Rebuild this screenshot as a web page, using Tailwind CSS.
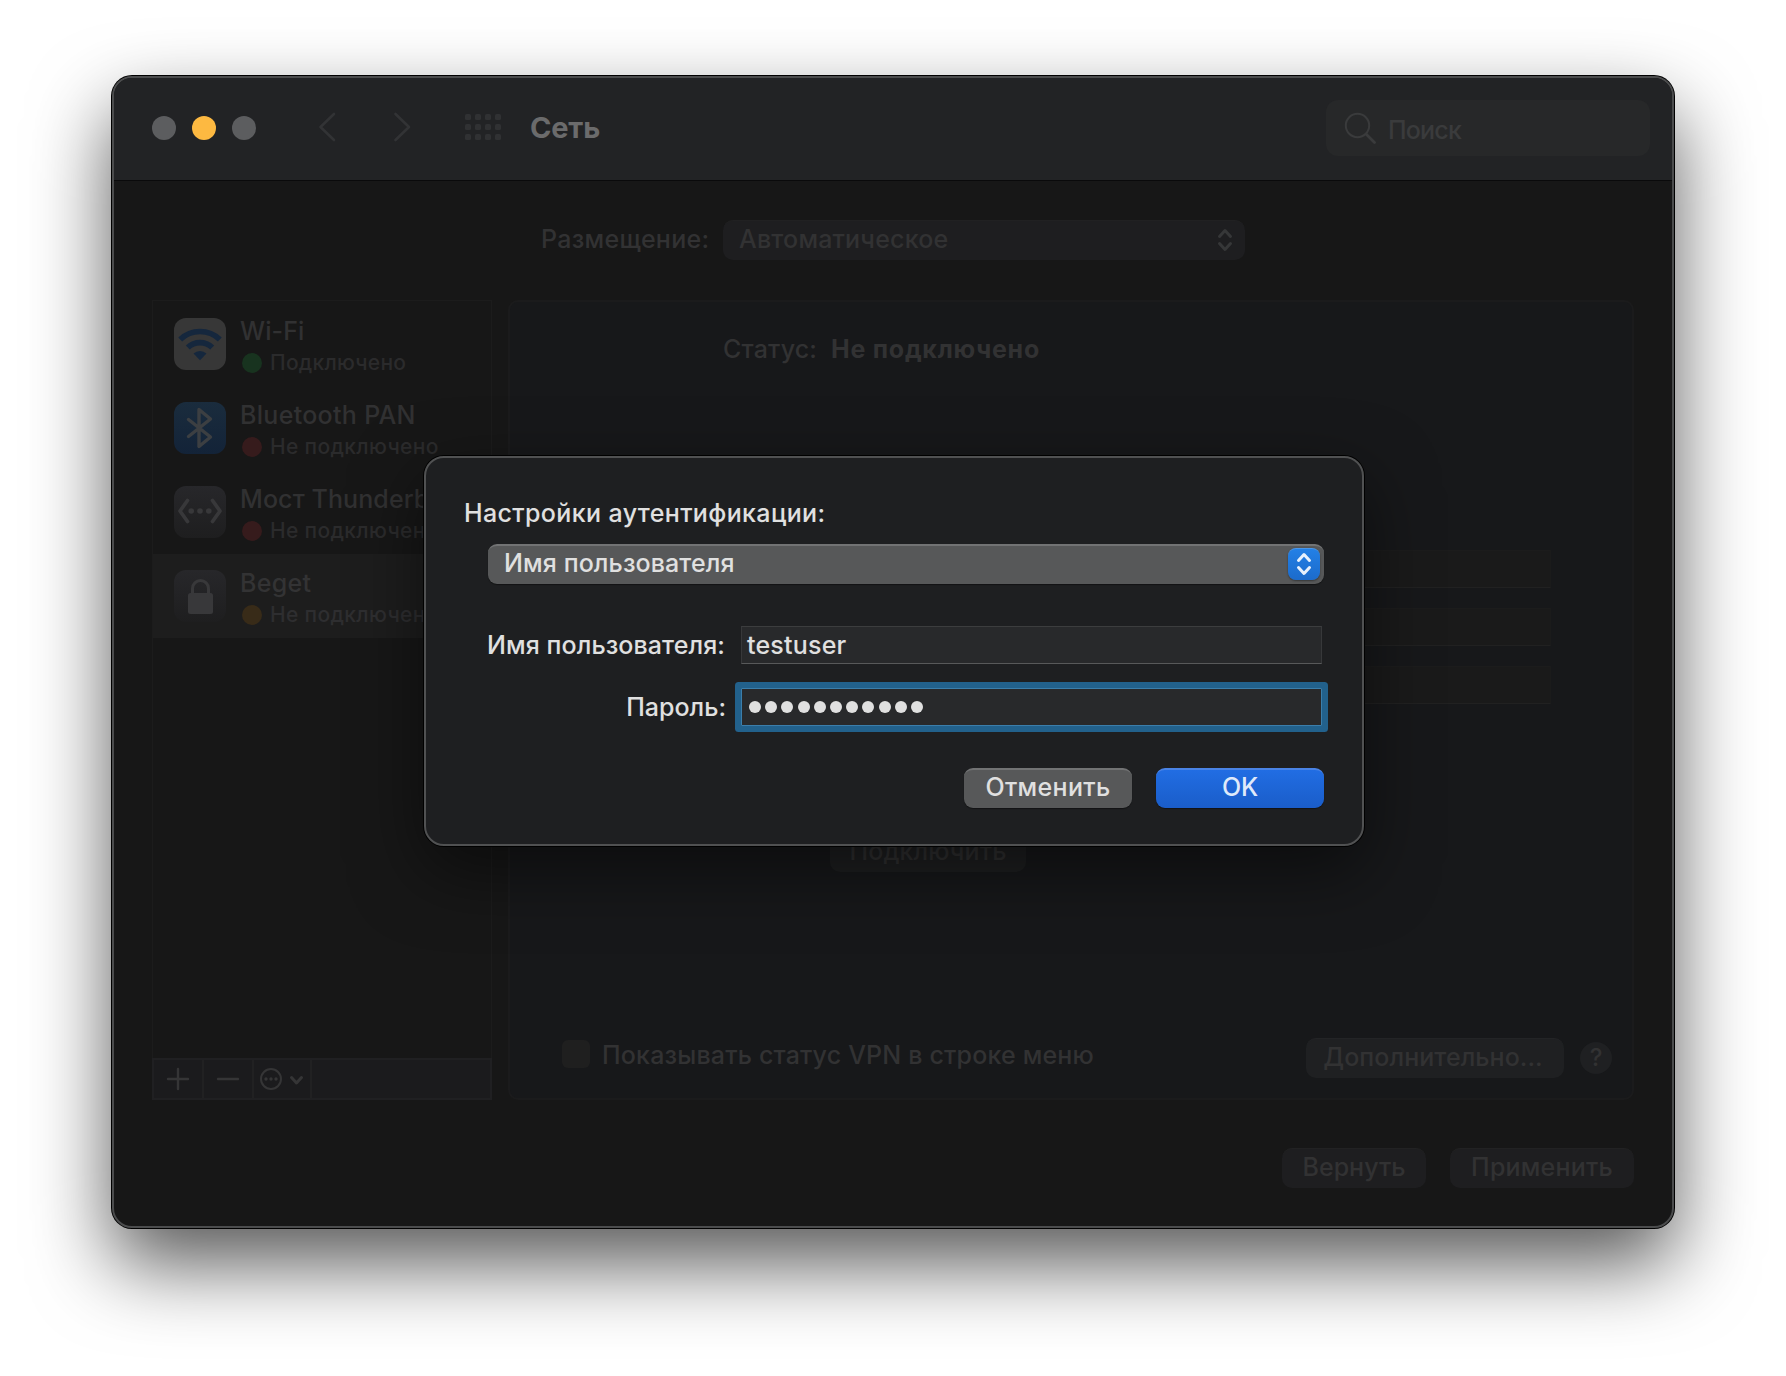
<!DOCTYPE html>
<html lang="ru">
	<head>
		<meta charset="UTF-8" />
		<meta name="viewport" content="width=device-width, initial-scale=1.0" />
		<title>Сеть</title>
		<script src="https://cdn.jsdelivr.net/npm/@tailwindcss/browser@4"></script>
	</head>
	<body
		class="h-[1376px] overflow-hidden bg-white pt-[76px] pl-[112px] font-['Inter','Liberation_Sans',sans-serif] text-[25px] leading-[30px] font-medium text-[#323233]"
	>
		<!-- Window -->
		<div
			class="relative h-[1152px] w-[1562px] rounded-[20px] border-2 border-[#4b4c4d] bg-[#171717] shadow-[0_0_0_1px_#000,0_36px_80px_rgba(0,0,0,0.66)]"
		>
			<!-- Title bar -->
			<header
				class="flex h-[103px] items-center rounded-t-[18px] border-b border-black/70 bg-[#222325] pr-[22px] pb-[2px] pl-[38px]"
			>
				<div class="flex gap-4">
					<span class="size-6 rounded-full bg-[#5c5d5f]"></span>
					<span class="size-6 rounded-full bg-[#fdb941]"></span>
					<span class="size-6 rounded-full bg-[#5c5d5f]"></span>
				</div>
				<svg class="mb-[2px] ml-[61px] h-[30px] w-[20px]" viewBox="0 0 20 30" fill="none" stroke="#323335" stroke-width="2.6" stroke-linecap="round" stroke-linejoin="round">
					<path d="M17 2 3.500 15 17 28" />
				</svg>
				<svg class="mb-[2px] ml-[55px] h-[30px] w-[20px]" viewBox="0 0 20 30" fill="none" stroke="#323335" stroke-width="2.6" stroke-linecap="round" stroke-linejoin="round">
					<path d="M3.500 2 17 15 3.500 28" />
				</svg>
				<div class="mb-[2px] ml-[53px] grid grid-cols-4 gap-[4px]">
					<span class="size-[6px] rounded-[1.5px] bg-[#303133]"></span>
					<span class="size-[6px] rounded-[1.5px] bg-[#303133]"></span>
					<span class="size-[6px] rounded-[1.5px] bg-[#303133]"></span>
					<span class="size-[6px] rounded-[1.5px] bg-[#303133]"></span>
					<span class="size-[6px] rounded-[1.5px] bg-[#303133]"></span>
					<span class="size-[6px] rounded-[1.5px] bg-[#303133]"></span>
					<span class="size-[6px] rounded-[1.5px] bg-[#303133]"></span>
					<span class="size-[6px] rounded-[1.5px] bg-[#303133]"></span>
					<span class="size-[6px] rounded-[1.5px] bg-[#303133]"></span>
					<span class="size-[6px] rounded-[1.5px] bg-[#303133]"></span>
					<span class="size-[6px] rounded-[1.5px] bg-[#303133]"></span>
					<span class="size-[6px] rounded-[1.5px] bg-[#303133]"></span>
				</div>
				<h1 class="mb-px ml-[29px] text-[29px] font-bold tracking-[-0.2px] text-[#6b6b6c]">Сеть</h1>
				<div class="ml-auto flex h-14 w-[324px] items-center rounded-[12px] bg-[#272829] pl-[18px] text-[#3a3b3c]">
					<svg class="size-8" viewBox="0 0 32 32" fill="none" stroke="currentColor" stroke-linecap="round">
						<circle cx="13.500" cy="13.500" r="11.700" stroke-width="2" />
						<path d="m22.500 22.500 8 8" stroke-width="2.800" />
					</svg>
					<span class="mt-[3px] ml-[12px] tracking-[-0.8px]">Поиск</span>
				</div>
			</header>

			<!-- Location -->
			<div class="mt-[39px] flex h-10 items-center pl-[426px]">
				<span class="w-[183px] pb-[2px] pl-px tracking-[0.3px]">Размещение:</span>
				<div class="flex h-10 w-[522px] items-center rounded-[10px] border-t border-[#212122] bg-[#1e1e20] pr-[12px] pb-[3px] pl-[16px]">
					<span class="tracking-[0.2px]">Автоматическое</span>
					<svg class="mt-[2px] ml-auto h-6 w-4" viewBox="0 0 16 24" fill="none" stroke="#363738" stroke-width="3" stroke-linecap="round" stroke-linejoin="round">
						<path d="M2.500 8.500 8 2.500l5.500 6M2.500 15.500l5.500 6 5.500-6" />
					</svg>
				</div>
			</div>

			<main class="mt-10 flex gap-4 pl-[38px]">
				<!-- Services -->
				<aside class="flex h-[800px] w-[340px] flex-col border border-[#1c1c1c]">
					<ul class="mt-px flex-1">
						<li class="flex h-[84px] pt-4 pl-[21px]">
							<svg class="size-[52px]" viewBox="0 0 52 52">
								<rect width="52" height="52" rx="12" fill="#373737" />
								<g fill="none" stroke="#15273d" stroke-width="5.600">
									<path d="M6.200 21.500a28.500 28.500 0 0 1 39.600 0" />
									<path d="M13.800 29.600a17.500 17.500 0 0 1 24.400 0" />
								</g>
								<path d="m26 42.200-6.500-6.600a9.500 9.500 0 0 1 13 0z" fill="#15273d" />
							</svg>
							<div class="ml-[14px]">
								<div class="-mt-[2px] tracking-[0.1px] text-[#313132]">Wi-Fi</div>
								<div class="mt-[1px] flex items-center text-[21px] tracking-[0.25px] text-[#2b2b2c]">
									<span class="mr-[8px] ml-[2px] size-5 rounded-full bg-[#18331f]"></span><span class="mt-px">Подключено</span>
								</div>
							</div>
						</li>
						<li class="flex h-[84px] pt-4 pl-[21px]">
							<svg class="size-[52px]" viewBox="0 0 52 52">
								<defs>
									<linearGradient id="bt" x2="0" y2="1">
										<stop stop-color="#1a2c3d" />
										<stop offset="1" stop-color="#132338" />
									</linearGradient>
								</defs>
								<rect width="52" height="52" rx="12" fill="url(#bt)" />
								<path d="m14.500 17.500 22 17.500-11.500 9.500v-37l11.500 9.500-22 17.500" fill="none" stroke="#3c3f42" stroke-width="3.400" stroke-linecap="round" stroke-linejoin="round" />
							</svg>
							<div class="ml-[14px]">
								<div class="-mt-[2px] tracking-[0.3px] text-[#313132]">Bluetooth PAN</div>
								<div class="mt-[1px] flex items-center text-[21px] tracking-[0.35px] text-[#2b2b2c]">
									<span class="mr-[8px] ml-[2px] size-5 rounded-full bg-[#361b1c]"></span><span class="mt-px">Не подключено</span>
								</div>
							</div>
						</li>
						<li class="flex h-[84px] pt-4 pl-[21px]">
							<svg class="size-[52px]" viewBox="0 0 52 52">
								<defs>
									<linearGradient id="grey" x2="0" y2="1">
										<stop stop-color="#27272a" />
										<stop offset="1" stop-color="#1e1e1f" />
									</linearGradient>
								</defs>
								<rect width="52" height="52" rx="12" fill="url(#grey)" />
								<g fill="none" stroke="#38383a" stroke-width="3.700" stroke-linejoin="round" stroke-linecap="round">
									<path d="m13.500 14.500-7.500 10.500 7.500 10.500M38.500 14.500l7.500 10.500-7.500 10.500" />
								</g>
								<g fill="#38383a">
									<circle cx="17.200" cy="25" r="2.800" />
									<circle cx="26" cy="25" r="2.800" />
									<circle cx="34.800" cy="25" r="2.800" />
								</g>
							</svg>
							<div class="ml-[14px] whitespace-nowrap">
								<div class="-mt-[2px] tracking-[0.1px] text-[#313132]">Мост Thunderbolt</div>
								<div class="mt-[1px] flex items-center text-[21px] tracking-[0.35px] text-[#2b2b2c]">
									<span class="mr-[8px] ml-[2px] size-5 rounded-full bg-[#361b1c]"></span><span class="mt-px">Не подключено</span>
								</div>
							</div>
						</li>
						<li class="flex h-[84px] bg-[#1d1d1d] pt-4 pl-[21px]">
							<svg class="size-[52px]" viewBox="0 0 52 52">
								<rect width="52" height="52" rx="12" fill="url(#grey)" />
								<path d="M18.500 24v-5.500a8 8 0 0 1 16 0V24" fill="none" stroke="#38383a" stroke-width="3" />
								<rect x="14" y="23" width="25" height="21" rx="2.500" fill="#38383a" />
							</svg>
							<div class="ml-[14px]">
								<div class="-mt-[2px] tracking-[0.3px] text-[#333334]">Beget</div>
								<div class="mt-[1px] flex items-center text-[21px] tracking-[0.35px] text-[#2e2e30]">
									<span class="mr-[8px] ml-[2px] size-5 rounded-full bg-[#382b18]"></span><span class="mt-px">Не подключено</span>
								</div>
							</div>
						</li>
					</ul>
					<div class="-mx-px -mb-px flex h-[42px] border-2 border-[#202022] bg-[#1b1b1d] text-[#353536]">
						<svg class="h-full w-[50px] border-r-2 border-[#212122]" viewBox="0 0 48 38" fill="none" stroke="currentColor" stroke-width="2.400" stroke-linecap="round">
							<path d="M14 19h20M24 9v20" />
						</svg>
						<svg class="h-full w-[50px] border-r-2 border-[#212122]" viewBox="0 0 48 38" fill="none" stroke="currentColor" stroke-width="2.400" stroke-linecap="round">
							<path d="M14 19h20" />
						</svg>
						<svg class="h-full w-[58px] border-r-2 border-[#212122]" viewBox="0 0 56 38" fill="none" stroke="currentColor" stroke-width="2">
							<circle cx="17" cy="19" r="10" />
							<g fill="currentColor" stroke="none">
								<circle cx="12" cy="19" r="1.700" />
								<circle cx="17" cy="19" r="1.700" />
								<circle cx="22" cy="19" r="1.700" />
							</g>
							<path d="m37.500 17.500 5 5.500 5-5.500" stroke-width="3" stroke-linecap="round" stroke-linejoin="round" />
						</svg>
					</div>
				</aside>

				<!-- Details -->
				<section class="flex h-[800px] w-[1126px] flex-col rounded-[10px] border-2 border-[#1b1b1c] bg-[#17181a] pl-[213px]">
					<div class="mt-8 flex text-[#323233]">
						<span class="w-[108px] tracking-[0.2px]">Статус:</span>
						<span class="font-bold tracking-[0.75px]">Не подключено</span>
					</div>
					<div class="mt-[186px] ml-[108px] grid w-[720px] gap-5">
						<span class="h-[38px] border border-t-[#1c1c1c] border-r-[#1b1b1b] border-b-[#212121] border-l-[#1b1b1b] bg-[#1a1a1a]"></span>
						<span class="h-[38px] border border-t-[#1c1c1c] border-r-[#1b1b1b] border-b-[#212121] border-l-[#1b1b1b] bg-[#1a1a1a]"></span>
						<span class="h-[38px] border border-t-[#1c1c1c] border-r-[#1b1b1b] border-b-[#212121] border-l-[#1b1b1b] bg-[#1a1a1a]"></span>
					</div>
					<button class="mt-32 ml-[107px] h-10 w-[196px] rounded-[10px] bg-[#1e1f20] pb-[2px] tracking-[0.1px] text-[#303031]">Подключить</button>
					<div class="mt-[166px] -ml-[213px] flex h-10 items-center pl-[52px]">
						<span class="mb-[8px] h-7 w-7 rounded-[6px] bg-[#1f1f1f]"></span>
						<span class="mb-[7px] ml-[12px] tracking-[0.18px]">Показывать статус VPN в строке меню</span>
						<button class="ml-auto h-10 w-[258px] rounded-[10px] border-t border-[#232426] bg-[#1f2022] pr-[4px] pb-[3px] tracking-[0.05px]">Дополнительно...</button>
						<button class="mr-5 ml-4 size-8 rounded-full bg-[#1f2022] text-[24px]">?</button>
					</div>
				</section>
			</main>

			<footer class="mt-12 flex justify-end gap-6 pr-[38px]">
				<button class="h-10 w-[144px] rounded-[10px] border-t border-[#222223] bg-[#1e1e20] pb-[3px] tracking-[0px]">Вернуть</button>
				<button class="h-10 w-[184px] rounded-[10px] border-t border-[#222223] bg-[#1e1e20] pb-[3px] tracking-[0.2px]">Применить</button>
			</footer>

			<!-- Authentication sheet -->
			<div
				class="absolute top-[378px] left-[310px] h-[390px] w-[940px] rounded-[20px] border-2 border-[#505152] bg-[#1e1f21] pt-[40px] pr-[38px] pl-[39px] font-[450] text-[#e0e0e0] shadow-[0_0_0_1px_#000,0_24px_70px_rgba(0,0,0,0.5)]"
			>
				<h2 class="-ml-px tracking-[0.37px]">Настройки аутентификации:</h2>
				<div class="mt-4 ml-[23px] flex h-10 items-center rounded-[9px] border-t-2 border-[#727374] bg-[#575859] pr-1 pl-[16px] shadow-[0_1px_1px_rgba(0,0,0,0.4)]">
					<span class="mb-[4px] tracking-[0.1px]">Имя пользователя</span>
					<span class="mb-[2px] ml-auto grid size-8 place-items-center rounded-[8px] border-t border-[#4a97ea] bg-linear-to-b from-[#2380e6] to-[#1c6bcb] shadow-[0_1px_2px_rgba(0,0,0,0.4)]">
						<svg class="mb-px h-6 w-4" viewBox="0 0 16 24" fill="none" stroke="#e8f1fc" stroke-width="3" stroke-linecap="round" stroke-linejoin="round">
							<path d="M2.500 8.500 8 2.500l5.500 6M2.500 15.500l5.500 6 5.500-6" />
						</svg>
					</span>
				</div>
				<div class="mt-[42px] flex items-center pr-[2px]">
					<label class="w-[260px] text-right tracking-[0.08px]">Имя пользователя:</label>
					<div class="ml-auto flex h-[38px] w-[581px] items-center border border-t-[#3c3d3e] border-r-[#37383a] border-b-[#58595a] border-l-[#37383a] bg-[#28292b] pb-px pl-[5px] tracking-[0.2px]">testuser</div>
				</div>
				<div class="mt-6 flex items-center pr-[2px]">
					<label class="w-[261px] text-right tracking-[0px]">Пароль:</label>
					<div class="ml-auto flex h-[38px] w-[581px] items-center gap-[4.200px] border border-[#3b7eab] bg-[#28292b] pl-[7px] shadow-[0_0_0_6px_#22618c] [border-radius:1px]">
						<span class="size-3 rounded-full bg-[#e0e0e0]"></span>
						<span class="size-3 rounded-full bg-[#e0e0e0]"></span>
						<span class="size-3 rounded-full bg-[#e0e0e0]"></span>
						<span class="size-3 rounded-full bg-[#e0e0e0]"></span>
						<span class="size-3 rounded-full bg-[#e0e0e0]"></span>
						<span class="size-3 rounded-full bg-[#e0e0e0]"></span>
						<span class="size-3 rounded-full bg-[#e0e0e0]"></span>
						<span class="size-3 rounded-full bg-[#e0e0e0]"></span>
						<span class="size-3 rounded-full bg-[#e0e0e0]"></span>
						<span class="size-3 rounded-full bg-[#e0e0e0]"></span>
						<span class="size-3 rounded-full bg-[#e0e0e0]"></span>
					</div>
				</div>
				<div class="mt-[42px] flex justify-end gap-6">
					<button class="h-10 w-[168px] rounded-[9px] border-t-2 border-[#727374] bg-[#575859] pb-[4px] tracking-[0.35px] shadow-[0_1px_1px_rgba(0,0,0,0.4)]">Отменить</button>
					<button class="h-10 w-[168px] rounded-[9px] border-t-2 border-[#4a83e6] bg-linear-to-b from-[#216de3] to-[#1a5dc9] pb-[4px] tracking-[-0.2px] text-[#dfe9fa] shadow-[0_1px_1px_rgba(0,0,0,0.4)]">OK</button>
				</div>
			</div>
		</div>
	</body>
</html>
